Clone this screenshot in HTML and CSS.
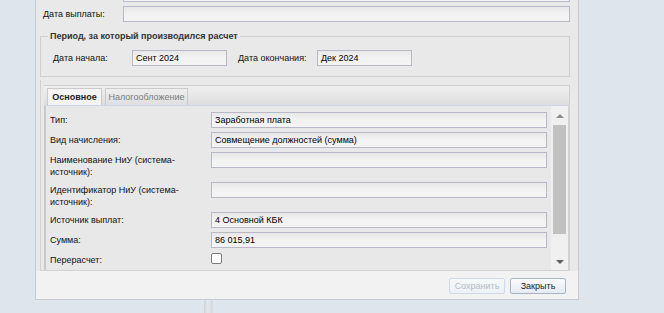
FILE: index.html
```html
<!DOCTYPE html>
<html>
<head>
    <title>Начисление</title>
    <link rel="stylesheet" href="styles.css">
  </head>

  <body>
    <div class="window">
      <div class="form">
        <div class="row top-row">
          <label class="top-label"></label>
          <div class="input wide"></div>
        </div>
        <div class="row top-row">
          <label class="top-label">Дата выплаты:</label>
          <div class="input wide"></div>
        </div>

        <fieldset class="period">
          <legend>Период, за который производился расчет</legend>
          <div class="period-row">
            <label class="period-label">Дата начала:</label>
            <div class="input short">Сент 2024</div>
            <label class="period-label second">Дата окончания:</label>
            <div class="input short">Дек 2024</div>
          </div>
        </fieldset>

        <div class="tabpanel">
          <div class="tabstrip">
            <div class="tab active">Основное</div>
            <div class="tab">Налогообложение</div>
          </div>
          <div class="tabbody">
            <div class="fields">
              <div class="row">
                <label class="field-label">Тип:</label>
                <div class="input wide">Заработная плата</div>
              </div>
              <div class="row">
                <label class="field-label">Вид начисления:</label>
                <div class="input wide">Совмещение должностей (сумма)</div>
              </div>
              <div class="row">
                <label class="field-label">Наименование НиУ (система-<br>источник):</label>
                <div class="input wide"></div>
              </div>
              <div class="row">
                <label class="field-label">Идентификатор НиУ (система-<br>источник):</label>
                <div class="input wide"></div>
              </div>
              <div class="row">
                <label class="field-label">Источник выплат:</label>
                <div class="input wide">4 Основной КБК</div>
              </div>
              <div class="row">
                <label class="field-label">Сумма:</label>
                <div class="input wide">86 015,91</div>
              </div>
              <div class="row">
                <label class="field-label">Перерасчет:</label>
                <span class="checkbox"></span>
              </div>
            </div>
            <div class="scrollbar">
              <div class="arrow"><span class="tri-up"></span></div>
              <div class="thumb"></div>
              <div class="track"></div>
              <div class="arrow"><span class="tri-down"></span></div>
            </div>
          </div>
        </div>
      </div>

      <div class="footer">
        <button class="btn disabled">Сохранить</button>
        <button class="btn">Закрыть</button>
      </div>
    </div>

    <div class="pillar"></div>
  </body>
</html>
```

FILE: styles.css
```css
 body {
   background-color: #dfe5ec;
   font-family: "Liberation Sans", Arial, sans-serif;
   font-size: 9px;
   color: #111;
   margin: 0;
   padding: 0;
   height: 313px;
   overflow: hidden;
 }

 .window {
   width: 542px;
   margin: -16px 0 0 35px;
   border: 1px solid #c6cbd1;
   background-color: #f2f2f2;
 }

 .form {
   background-color: #e9e9e9;
   padding: 1px 8px 0 4px;
 }

 .row {
   display: flex;
   align-items: flex-start;
   margin-bottom: 4px;
 }

 .top-row {
   padding-left: 3px;
 }

 .top-label {
   width: 80px;
   flex-shrink: 0;
   line-height: 12px;
   padding-top: 2px;
 }

 .input {
   box-sizing: border-box;
   height: 16px;
   border: 1px solid #b7b9c9;
   background: linear-gradient(#e8e8e8, #f2f2f2 45%, #f4f4f4);
   padding: 0 3px;
   line-height: 14px;
   color: #000;
   white-space: nowrap;
 }

 .wide {
   flex: 1;
 }

 .short {
   width: 95px;
 }

 /* period fieldset */
 .period {
   margin: 8px 0 0 0;
   border: 1px solid #cfcfcf;
   padding: 0 0 10px 7px;
 }

 .period legend {
   padding: 0 2px;
   font-weight: bold;
   line-height: 12px;
   color: #333;
 }

 .period-row {
   display: flex;
   margin-top: 8px;
   padding-left: 5px;
 }

 .period-label {
   width: 79px;
   line-height: 16px;
 }

 .period-label.second {
   margin-left: 11px;
 }

 /* tabs */
 .tabpanel {
   margin-top: 3px;
   border-left: 1px solid #d2d2d2;
   border-bottom: 1px solid #d2d2d2;
   padding: 5px 0 0 3px;
 }

 .tabstrip {
   display: flex;
   align-items: flex-end;
   height: 19px;
   padding-left: 3px;
   border-top: 1px solid #d0d0d0;
   border-right: 1px solid #d0d0d0;
   border-bottom: 1px solid #c9d7e4;
   background: linear-gradient(#f0f0f0, #dddddd);
 }

 .tab {
   box-sizing: border-box;
   width: 83px;
   height: 17px;
   line-height: 16px;
   text-align: center;
   margin-right: 3px;
   border: 1px solid #cacaca;
   border-bottom: none;
   background: linear-gradient(#eeeeee, #dfdfdf);
   color: #7d7d7d;
 }

 .tab.active {
   width: 55px;
   background: #f4f4f4;
   color: #222;
   font-weight: bold;
 }

 .tabbody {
   display: flex;
   height: 164px;
   border-left: 2px solid #c9c9c9;
   border-right: 2px solid #d2d2d2;
   background-color: #e8e8e8;
 }

 .fields {
   flex: 1;
   padding: 6px 4px 0 4px;
 }

 .field-label {
   width: 161px;
   flex-shrink: 0;
   line-height: 12px;
   padding-top: 2px;
 }

 .checkbox {
   width: 9px;
   height: 9px;
   margin-top: 1px;
   border: 1px solid #7b7b7b;
   border-radius: 2px;
   background-color: #fff;
 }

 /* scrollbar */
 .scrollbar {
   width: 17px;
   display: flex;
   flex-direction: column;
   background-color: #f0f0f0;
 }

 .arrow {
   height: 19px;
   display: flex;
   align-items: center;
   justify-content: center;
 }

 .arrow:last-child {
   height: 17px;
 }

 .tri-up {
   border-left: 4px solid transparent;
   border-right: 4px solid transparent;
   border-bottom: 4px solid #8c8c8c;
 }

 .tri-down {
   border-left: 4px solid transparent;
   border-right: 4px solid transparent;
   border-top: 4px solid #5e5e5e;
 }

 .thumb {
   height: 109px;
   margin: 0 2px;
   background-color: #c1c1c1;
 }

 .track {
   flex: 1;
 }

 /* footer */
 .footer {
   display: flex;
   justify-content: flex-end;
   gap: 5px;
   height: 21px;
   padding: 7px 12px 0 0;
 }

 .btn {
   width: 56px;
   height: 16px;
   padding: 0;
   font-family: "Liberation Sans", Arial, sans-serif;
   font-size: 9px;
   color: #222;
   border: 1px solid #a3b5c9;
   border-radius: 2px;
   background: linear-gradient(#fbfcfe, #e4ebf3);
 }

 .btn.disabled {
   color: #b3bcc6;
   border-color: #cfdae6;
   background: linear-gradient(#f6f8fb, #edf1f5);
 }

 .pillar {
   width: 9px;
   height: 13px;
   margin-left: 204px;
   background: linear-gradient(to right, #cdd2d8, #e4e8ec 40%, #d3d8de);
 }
```
